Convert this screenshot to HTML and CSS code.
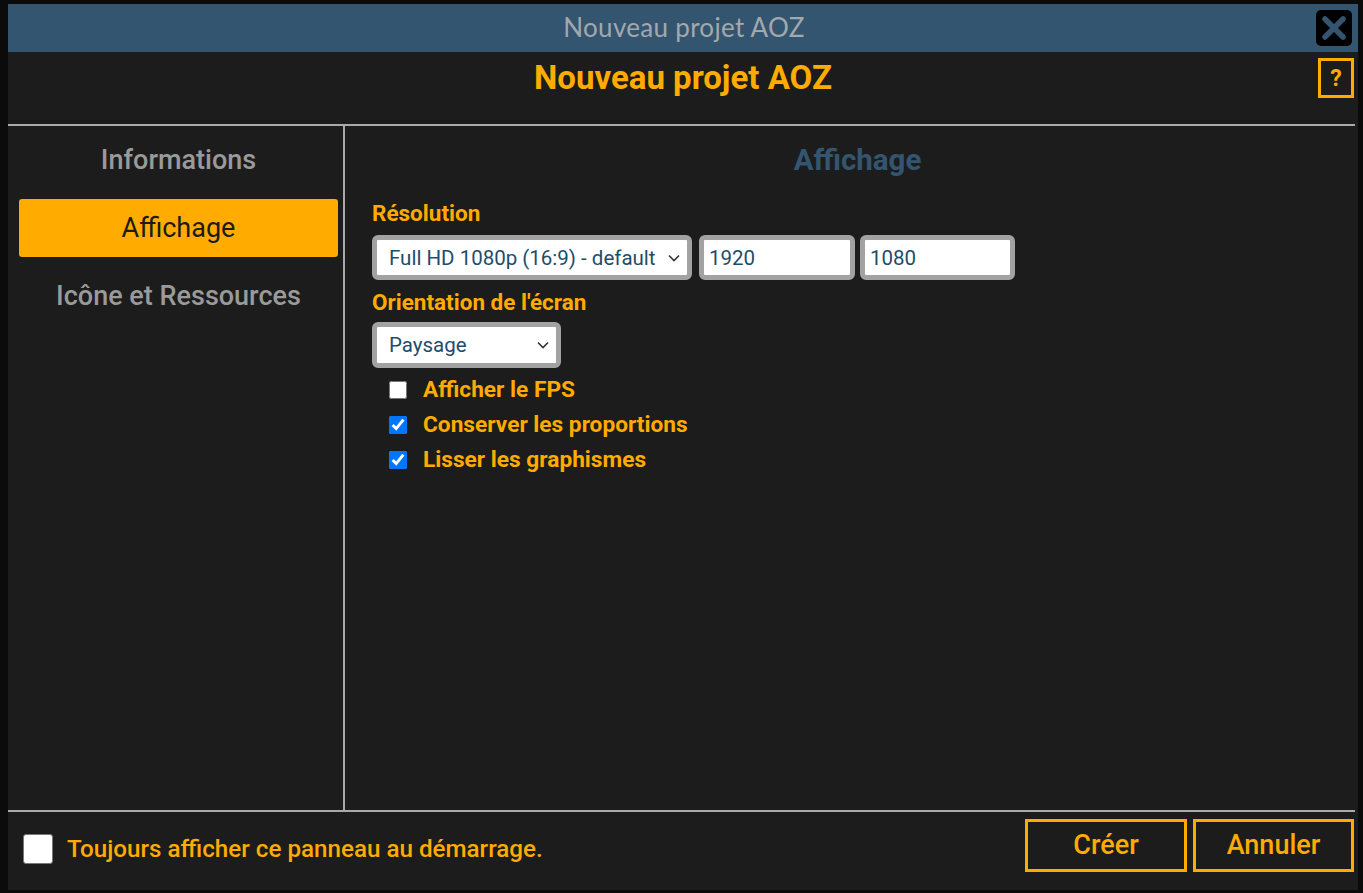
FILE: index.html
```html
<!DOCTYPE html>
<html lang="fr">
<head>
<meta charset="utf-8">
<title>Nouveau projet AOZ</title>
<link rel="stylesheet" href="styles.css">
</head>
<body>
<div class="dialog">
  <div class="titlebar">
    <span class="titlebar-text">Nouveau projet AOZ</span>
    <button class="close-btn" aria-label="Fermer">
      <svg width="24" height="24" viewBox="0 0 24 24"><path d="M3 3 L21 21 M21 3 L3 21" stroke="#34556f" stroke-width="5.5" stroke-linecap="round" fill="none"/></svg>
    </button>
  </div>
  <div class="header">
    <h1 class="header-title">Nouveau projet AOZ</h1>
    <button class="help-btn">?</button>
  </div>
  <div class="main">
    <nav class="sidebar">
      <div class="nav-item">Informations</div>
      <div class="nav-item active">Affichage</div>
      <div class="nav-item">Icône et Ressources</div>
    </nav>
    <section class="content">
      <h2 class="section-title">Affichage</h2>
      <div class="label">Résolution</div>
      <div class="row">
        <div class="select sel-res">
          <span>Full HD 1080p (16:9) - default</span>
          <svg width="14" height="14" viewBox="0 0 14 14"><path d="M2 4.5 L7 9.5 L12 4.5" stroke="#333" stroke-width="1.6" fill="none"/></svg>
        </div>
        <div class="input inp-w">1920</div>
        <div class="input inp-h">1080</div>
      </div>
      <div class="label">Orientation de l'écran</div>
      <div class="row">
        <div class="select sel-orient">
          <span>Paysage</span>
          <svg width="14" height="14" viewBox="0 0 14 14"><path d="M2 4.5 L7 9.5 L12 4.5" stroke="#333" stroke-width="1.6" fill="none"/></svg>
        </div>
      </div>
      <div class="checks">
        <label class="check"><input type="checkbox"><span>Afficher le FPS</span></label>
        <label class="check"><input type="checkbox" checked><span>Conserver les proportions</span></label>
        <label class="check"><input type="checkbox" checked><span>Lisser les graphismes</span></label>
      </div>
    </section>
  </div>
  <div class="footer">
    <div class="footer-left">
      <span class="big-check"></span>
      <span class="footer-label">Toujours afficher ce panneau au démarrage.</span>
    </div>
    <div class="footer-buttons">
      <button class="btn btn-create">Créer</button>
      <button class="btn btn-cancel">Annuler</button>
    </div>
  </div>
</div>
</body>
</html>
```

FILE: styles.css
```css
* { box-sizing: border-box; }
html, body { margin: 0; padding: 0; }
body {
  background: #0b0b0b;
  font-family: Roboto, "Liberation Sans", sans-serif;
  width: 1363px;
  height: 893px;
  overflow: hidden;
}
.dialog {
  margin: 4px 0 0 8px;
  width: 1350px;
  height: 886px;
  background: #1c1c1c;
  display: flex;
  flex-direction: column;
}
.titlebar {
  position: relative;
  height: 48px;
  background: #34556f;
  display: flex;
  align-items: center;
  justify-content: center;
}
.titlebar-text {
  font-family: Lato, "Open Sans", sans-serif;
  font-size: 26px;
  color: #a3a8ad;
  font-weight: 400;
  letter-spacing: 0.3px;
  padding: 0 0 3px 2px;
}
.close-btn {
  position: absolute;
  right: 6px;
  top: 6px;
  width: 36px;
  height: 36px;
  background: #000;
  border: none;
  border-radius: 5px;
  padding: 0;
  display: flex;
  align-items: center;
  justify-content: center;
}
.header {
  position: relative;
  height: 74px;
  display: flex;
  align-items: center;
  justify-content: center;
  border-bottom: 2px solid #aaaaaa;
  margin-right: 3px;
  padding: 0 0 20px 3px;
}
.header-title {
  margin: 0;
  font-size: 33px;
  font-weight: 700;
  color: #ffab00;
  line-height: 40px;
}
.help-btn {
  position: absolute;
  right: 1px;
  top: 6px;
  width: 36px;
  height: 40px;
  background: transparent;
  border: 3px solid #ffab00;
  color: #ffab00;
  font-family: Roboto, sans-serif;
  font-weight: 700;
  font-size: 23px;
  padding: 0;
}
.main {
  display: flex;
  height: 686px;
  border-bottom: 2px solid #aaaaaa;
  margin-right: 3px;
}
.sidebar {
  width: 337px;
  border-right: 2px solid #aaaaaa;
  padding: 5px 5px 0 11px;
  display: flex;
  flex-direction: column;
  gap: 10px;
}
.nav-item {
  height: 58px;
  display: flex;
  align-items: center;
  justify-content: center;
  font-size: 27px;
  font-weight: 500;
  color: #9a9a9a;
  border-radius: 3px;
}
.nav-item.active {
  background: #ffab00;
  color: #1c1c1c;
  font-weight: 400;
}
.content {
  flex: 1;
  padding: 19px 12px 0 27px;
  display: flex;
  flex-direction: column;
}
.section-title {
  margin: 0;
  text-align: center;
  font-size: 29.5px;
  font-weight: 700;
  color: #34556f;
  line-height: 30px;
}
.label {
  font-size: 22.5px;
  font-weight: 700;
  color: #ffab00;
  line-height: 24px;
  margin-top: 26px;
}
.label + .row { margin-top: 10px; }
.row + .label { margin-top: 10px; }
.row {
  display: flex;
  gap: 7px;
}
.select, .input {
  height: 45px;
  border: 5px solid #a2a2a2;
  border-radius: 6px;
  background: #fff;
  font-size: 20.5px;
  color: #1d4d6c;
  display: flex;
  align-items: center;
}
.select {
  justify-content: space-between;
  padding: 0 6px 0 12px;
}
.sel-res { width: 320px; }
.sel-orient { width: 189px; height: 46px; margin-top: -2px; }
.input {
  padding: 0 5px;
  width: 156px;
}
.inp-h { width: 155px; margin-left: -2px; }
.checks {
  margin-top: 4px;
  padding-left: 17px;
  display: flex;
  flex-direction: column;
}
.check {
  height: 35px;
  display: flex;
  align-items: center;
  gap: 16px;
  font-size: 22.7px;
  font-weight: 700;
  color: #ffab00;
}
.check input {
  width: 18px;
  height: 18px;
  margin: 0;
  accent-color: #0075ff;
}
.footer {
  flex: 1;
  display: flex;
  justify-content: space-between;
  align-items: flex-start;
  padding: 7px 4px 0 15px;
}
.footer-left {
  margin-top: 15px;
  display: flex;
  align-items: center;
  gap: 14px;
}
.big-check {
  width: 30px;
  height: 30px;
  background: #fff;
  border: 1px solid #777;
  border-radius: 3px;
}
.footer-label {
  font-size: 24.2px;
  font-weight: 500;
  color: #ffab00;
}
.footer-buttons {
  display: flex;
  gap: 6px;
}
.btn {
  height: 53px;
  background: transparent;
  border: 3px solid #ffab00;
  color: #ffab00;
  font-family: Roboto, sans-serif;
  font-size: 27px;
  font-weight: 500;
  padding: 0 0 2px;
}
.btn-create { width: 162px; }
.btn-cancel { width: 161px; }
```
